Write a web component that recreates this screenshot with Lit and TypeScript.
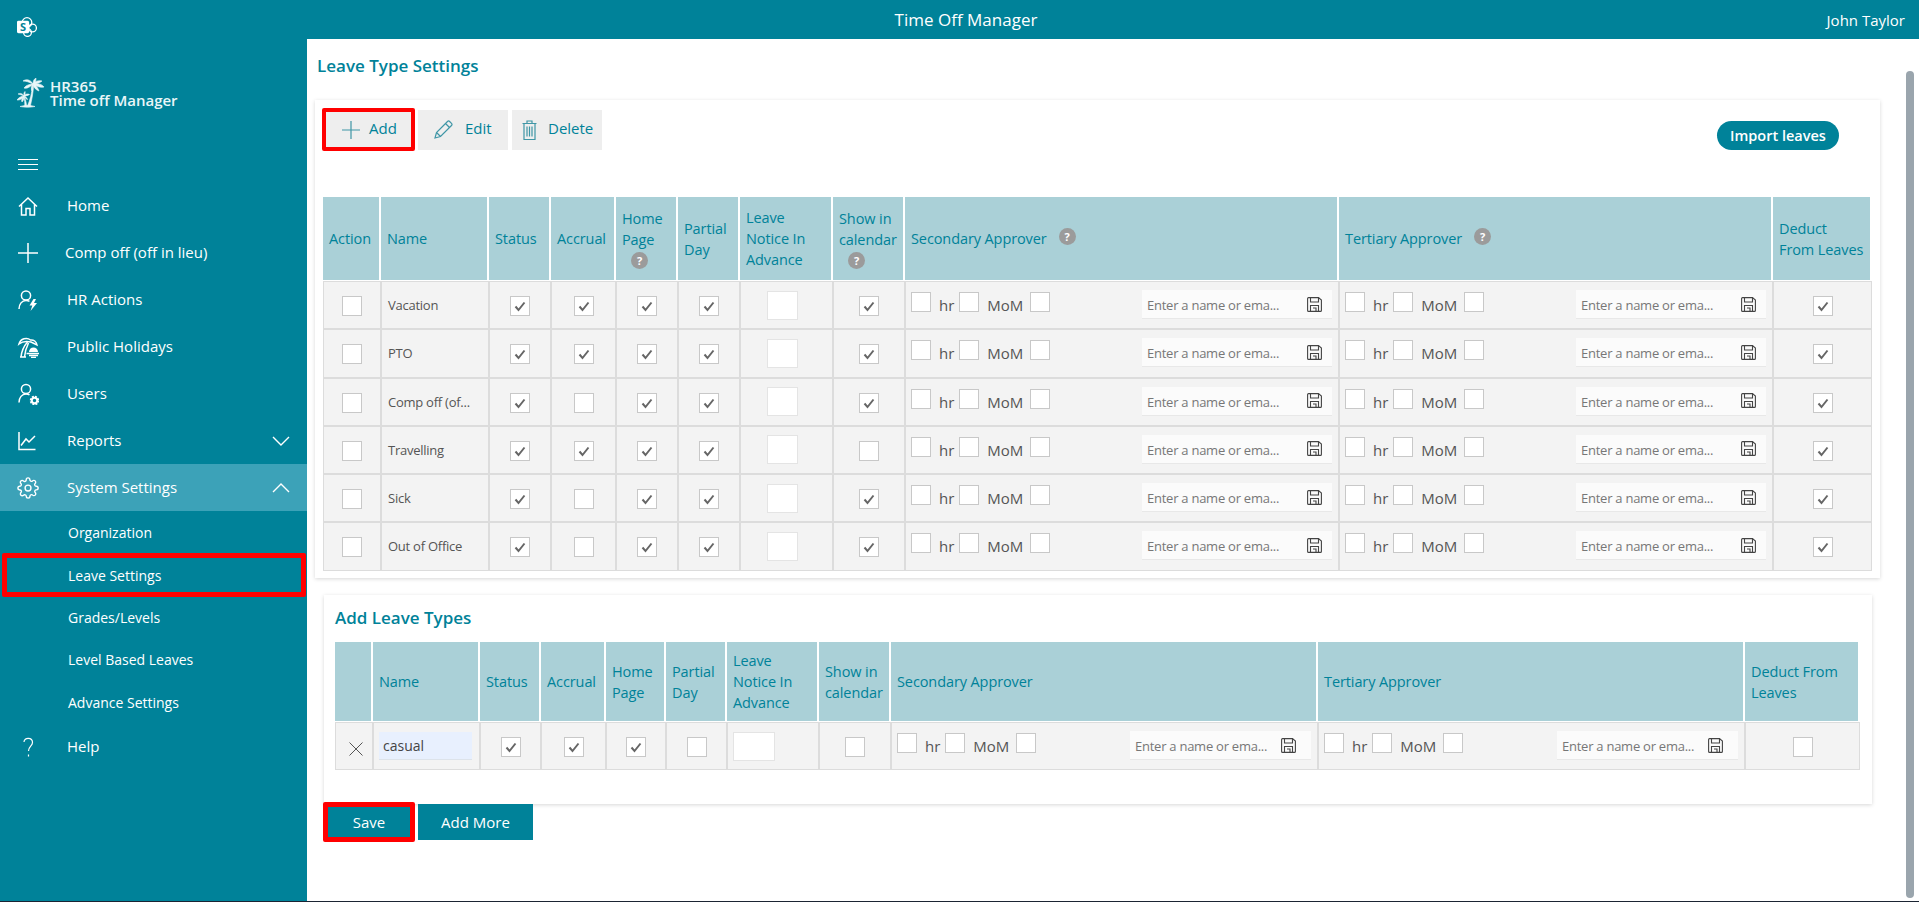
import { LitElement, html, css, svg } from 'lit';
import { customElement } from 'lit/decorators.js';
import { classMap } from 'lit/directives/class-map.js';

const gearPath = 'M19.4 15a1.65 1.65 0 0 0 .33 1.82l.06.06a2 2 0 0 1 0 2.83 2 2 0 0 1-2.83 0l-.06-.06a1.65 1.65 0 0 0-1.82-.33 1.65 1.65 0 0 0-1 1.51V21a2 2 0 0 1-2 2 2 2 0 0 1-2-2v-.09A1.65 1.65 0 0 0 9 19.4a1.65 1.65 0 0 0-1.82.33l-.06.06a2 2 0 0 1-2.83 0 2 2 0 0 1 0-2.83l.06-.06a1.65 1.65 0 0 0 .33-1.82 1.65 1.65 0 0 0-1.51-1H3a2 2 0 0 1-2-2 2 2 0 0 1 2-2h.09A1.65 1.65 0 0 0 4.6 9a1.65 1.65 0 0 0-.33-1.82l-.06-.06a2 2 0 0 1 0-2.83 2 2 0 0 1 2.83 0l.06.06a1.65 1.65 0 0 0 1.82.33H9a1.65 1.65 0 0 0 1-1.51V3a2 2 0 0 1 2-2 2 2 0 0 1 2 2v.09a1.65 1.65 0 0 0 1 1.51 1.65 1.65 0 0 0 1.82-.33l.06-.06a2 2 0 0 1 2.83 0 2 2 0 0 1 0 2.83l-.06.06a1.65 1.65 0 0 0-.33 1.82V9a1.65 1.65 0 0 0 1.51 1H21a2 2 0 0 1 2 2 2 2 0 0 1-2 2h-.09a1.65 1.65 0 0 0-1.51 1z';

const navIcons: Record<string, unknown> = {
  home: svg`<path d="M2 11.5 11 3l9 8.5M4.5 9.5V20H9v-6.5h4V20h4.5V9.5"/>`,
  plus: svg`<path d="M1 11h20M11 1v20"/>`,
  hr: svg`<circle cx="9" cy="6.5" r="4.6"/><path d="M2 20c0-5 3-8.500 7-8.500 1.500 0 2.500.3 3.500.9"/><path fill="#fff" stroke="none" d="M16.500 10 12.500 16.500h2.800L13.500 22l6.500-8h-3l2-4z"/>`,
  holidays: svg`<path d="M2 8C3.500 2.500 10 1 13.500 4c3-.5 6 1.500 6.500 5l-6-3C10 5 5 5.500 2 8z"/><path d="M4 21c.5-5 3-11 6.500-15M7.500 21c.5-5 2-10 4-14M3 21h6"/><path fill="#fff" stroke="none" d="M12 16a4.500 4.500 0 0 1 9 0z"/><path d="M9.500 17.500H23M12 19.500h9M14 21.500h5"/>`,
  users: svg`<circle cx="9" cy="6" r="4.600"/><path d="M2 19.500c0-5 3-8.500 7-8.500 1.500 0 2.500.3 3.500.9"/><circle cx="17.500" cy="17.500" r="2.700" stroke-width="2"/><circle cx="17.500" cy="17.500" r="4" stroke-width="1.500" stroke-dasharray="2 1.140"/>`,
  chart: svg`<path d="M2 2v17.500h16.500M4 15.500l5-6.500 3 3 6-6"/>`,
  settings: svg`<g transform="scale(.92)"><circle cx="12" cy="12" r="3.200"/><path d="${gearPath}"/></g>`,
  help: svg`<path d="M7 6c0-5 8.500-5 8.500.5 0 3.500-4 4-4 8.500M11.500 18.500V20.500" stroke-width="1.200"/>`,
};

const navBefore = [
  { label: 'Home', icon: 'home' },
  { label: 'Comp off (off in lieu)', icon: 'plus', tight: true },
  { label: 'HR Actions', icon: 'hr' },
  { label: 'Public Holidays', icon: 'holidays' },
  { label: 'Users', icon: 'users' },
  { label: 'Reports', icon: 'chart', chevron: 'M1 1l8 8 8-8' },
  { label: 'System Settings', icon: 'settings', chevron: 'M1 9l8-8 8 8', active: true },
];

const subNav = ['Organization', 'Leave Settings', 'Grades/Levels', 'Level Based Leaves', 'Advance Settings'];

const leaves = [
  { name: 'Vacation', accrual: true, calendar: true },
  { name: 'PTO', accrual: true, calendar: true },
  { name: 'Comp off (of...', accrual: false, calendar: true },
  { name: 'Travelling', accrual: true, calendar: false },
  { name: 'Sick', accrual: false, calendar: true },
  { name: 'Out of Office', accrual: false, calendar: true },
];

@customElement('app-root')
export class AppRoot extends LitElement {
  static styles = css`
    :host {
      display: flex;
      flex-direction: column;
      height: 902px;
      box-sizing: border-box;
      border-bottom: 1px solid #1b2433;
      font-family: 'Open Sans', 'Noto Sans', sans-serif;
      font-size: 14px;
      color: #555;
      background: #fff;
      overflow: hidden;
    }

    .topbar {
      display: grid;
      grid-template-columns: 1fr auto 1fr;
      align-items: center;
      flex: 0 0 39px;
      background: #008299;
      color: #fff;
      padding: 0 14px 0 17px;
    }

    .sp-logo {
      align-self: end;
      margin-bottom: 2px;
      display: block;
    }

    .topbar-title {
      font-size: 17px;
      margin-left: 10px;
    }

    .topbar-user {
      justify-self: end;
      font-size: 15px;
    }

    .body {
      display: flex;
      flex: 1;
      min-height: 0;
    }

    aside {
      flex: 0 0 307px;
      background: #008299;
      color: #fff;
    }

    .brand {
      display: flex;
      margin: 39px 0 0 17px;
      height: 30px;
      gap: 5px;
    }

    .brand-text {
      font-weight: 600;
      font-size: 15px;
      line-height: 14px;
      color: #eaf6f8;
      padding-top: 1px;
    }

    .burger {
      display: block;
      margin: 51px 0 12px 18px;
    }

    .nav-row {
      display: flex;
      align-items: center;
      height: 47px;
      padding-left: 17px;
      font-size: 15px;
    }

    .nav-row span {
      margin-top: -2px;
    }

    .nav-row.active {
      background: #3ca2b8;
    }

    .nav-icon {
      flex: 0 0 22px;
      width: 22px;
      height: 22px;
      margin-right: 28px;
      fill: none;
      stroke: #fff;
      stroke-width: 1.5;
    }

    .nav-row.tight .nav-icon {
      margin-right: 26px;
    }

    .chevron {
      margin-left: auto;
      margin-right: 17px;
      fill: none;
      stroke: #fff;
      stroke-width: 1.4;
    }

    .sub-row {
      display: flex;
      align-items: center;
      height: 42.5px;
      padding-left: 68px;
      font-size: 14px;
      box-sizing: border-box;
    }

    .sub-row.marked {
      margin-left: 2px;
      width: 304px;
      padding-left: 61px;
      border: 5px solid #ff0000;
      border-radius: 2px;
      height: 44px;
      margin-top: -0.5px;
      margin-bottom: -1px;
    }

    main {
      position: relative;
      flex: 1;
      padding-left: 8px;
    }

    .scroll-thumb {
      position: absolute;
      top: 32px;
      right: 5px;
      bottom: 3px;
      width: 8px;
      border-radius: 4px;
      background: #9aa5ad;
    }

    h1 {
      margin: 0 0 0 2px;
      height: 61px;
      display: flex;
      align-items: center;
      padding-bottom: 9px;
      box-sizing: border-box;
      font-size: 17px;
      font-weight: 600;
      color: #008299;
    }

    .card {
      background: #fff;
      box-shadow: 0 1px 4px rgba(0, 0, 0, 0.16);
    }

    .card-leaves {
      width: 1565px;
      height: 478px;
      box-sizing: border-box;
      padding: 8px 0 0 8px;
    }

    .card-add {
      width: 1548px;
      height: 209px;
      margin: 17px 0 0 9px;
      box-sizing: border-box;
      padding: 11px 0 0 11px;
    }

    .toolbar {
      display: flex;
      align-items: center;
      height: 43px;
      margin: 0 0 46px -1px;
    }

    .tool {
      display: flex;
      align-items: center;
      box-sizing: border-box;
      height: 40px;
      width: 90px;
      background: #eee;
      color: #008299;
      font-size: 15px;
      margin-right: 4px;
    }

    .tool span {
      margin-bottom: 4px;
    }

    .tool svg {
      fill: none;
      stroke: #3f96a6;
      stroke-width: 1.2;
    }

    .tool.add {
      width: 93px;
      height: 43px;
      padding-left: 16px;
      gap: 9px;
      border: 4px solid #ff0000;
      border-radius: 2px;
      margin-right: 3px;
    }

    .tool.edit {
      padding-left: 16px;
      gap: 12px;
    }

    .tool.delete {
      padding-left: 10px;
      gap: 11px;
    }

    .import {
      margin-left: auto;
      margin-right: 41px;
      margin-top: 13px;
      align-self: flex-start;
      display: flex;
      align-items: center;
      justify-content: center;
      width: 122px;
      height: 29px;
      border-radius: 15px;
      background: #008299;
      color: #fff;
      font-size: 14.5px;
      font-weight: 600;
    }

    .grid {
      display: grid;
    }

    .grid.existing {
      grid-template-columns: 58px 108px 62px 65px 62px 62px 93px 72px 434px 434px 99px;
      grid-template-rows: 84px;
      grid-auto-rows: 48.25px;
    }

    .grid.adding {
      grid-template-columns: 38px 107px 61px 65px 60px 61px 92px 72px 427px 427px 115px;
      grid-template-rows: 80px;
      grid-auto-rows: 48px;
    }

    .head {
      display: flex;
      align-items: center;
      background: #aad0d7;
      color: #008299;
      font-size: 14.5px;
      line-height: 21px;
      padding-left: 6px;
      margin: 0 2px 1px 0;
      letter-spacing: -0.1px;
    }

    .head:last-of-type {
      margin-right: 0;
    }

    .hint {
      display: inline-flex;
      align-items: center;
      justify-content: center;
      width: 17px;
      height: 17px;
      border-radius: 50%;
      background: #9b9b9b;
      color: #fff;
      font-size: 11px;
      font-weight: 700;
      line-height: 17px;
      letter-spacing: 0;
    }

    .hint.below {
      display: flex;
      margin: 2px 0 0 9px;
    }

    .hint.beside {
      margin: 0 0 4px 12px;
    }

    .cell {
      box-sizing: border-box;
      background: #f3f3f3;
      border: 1px solid #dcdcdc;
      display: flex;
      align-items: center;
      min-width: 0;
    }

    .cell.mid {
      justify-content: center;
      padding-top: 2px;
    }

    .cell.name {
      padding-left: 6px;
      white-space: nowrap;
      letter-spacing: -0.25px;
      font-size: 13px;
    }

    .cell.approver {
      align-items: flex-start;
      padding: 10px 6px 0 5px;
    }

    .box {
      flex: none;
      box-sizing: border-box;
      width: 20px;
      height: 20px;
      background: #fff;
      border: 1px solid #c8c8c8;
    }

    .box svg {
      display: block;
      fill: none;
      stroke: #666;
      stroke-width: 2;
    }

    .notice {
      box-sizing: border-box;
      width: 31px;
      height: 29px;
      margin: 0 9px 2px 0;
      background: #fff;
      border: 1px solid #e4e4e4;
    }

    .adding .notice {
      width: 42px;
      margin-right: 38px;
    }

    .tag {
      font-size: 15px;
      line-height: 20px;
      margin: 3px 5px 0 8px;
    }

    .tag.mom {
      margin-right: 7px;
    }

    .people {
      display: flex;
      align-items: center;
      justify-content: space-between;
      box-sizing: border-box;
      width: 190px;
      height: 29px;
      margin: -2px 0 0 auto;
      padding: 0 10px 0 5px;
      background: #fbfbfb;
      border-bottom: 1px solid #e8e8e8;
      color: #777;
      font-size: 13px;
      letter-spacing: -0.25px;
      white-space: nowrap;
    }

    .people span {
      margin-top: 2px;
    }

    .adding .people {
      width: 181px;
      padding-right: 15px;
    }

    .people svg {
      flex: none;
      fill: none;
      stroke: #444;
      stroke-width: 1.1;
    }

    .card-title {
      height: 36px;
      font-size: 17px;
      font-weight: 600;
      line-height: 24px;
      color: #008299;
    }

    .remove {
      fill: none;
      stroke: #555;
      stroke-width: 1;
      margin: 4px 0 0 4px;
    }

    .casual {
      box-sizing: border-box;
      width: 93px;
      height: 28px;
      margin-left: 5px;
      padding-left: 4px;
      line-height: 28px;
      background: #e8f0fe;
      border-bottom: 1px solid #dde3ea;
      color: #444;
    }

    .actions {
      display: flex;
      align-items: flex-start;
      margin: -2px 0 0 8px;
    }

    .action {
      box-sizing: border-box;
      display: flex;
      align-items: center;
      justify-content: center;
      background: #008299;
      color: #fff;
      height: 36px;
      font-size: 15px;
    }

    .action.save {
      width: 92px;
      height: 40px;
      border: 5px solid #ff0000;
      border-radius: 2px;
      margin-right: 3px;
    }

    .action.more {
      width: 115px;
      margin-top: 2px;
    }
  `;

  private check(on: boolean) {
    return html`<div class="box">
      ${on ? html`<svg width="18" height="18" viewBox="0 0 18 18"><path d="M4.500 9.500 7.500 13 13.500 5.500"/></svg>` : ''}
    </div>`;
  }

  private saveIcon() {
    return html`<svg width="15" height="15" viewBox="0 0 15 15">
      <path d="M1.500.6h10L14.400 3v10.400a1 1 0 0 1-1 1H1.600a1 1 0 0 1-1-1V1.500a1 1 0 0 1 .9-.9z"/>
      <path d="M3.500.6v4.400h8V.6M3.500 14.400V8.500h8v5.900M6 11h3v3.400"/>
    </svg>`;
  }

  private approver() {
    return html`<div class="cell approver">
      <div class="box"></div>
      <span class="tag">hr</span>
      <div class="box"></div>
      <span class="tag mom">MoM</span>
      <div class="box"></div>
      <div class="people"><span>Enter a name or ema...</span>${this.saveIcon()}</div>
    </div>`;
  }

  private hintBelow() {
    return html`<span class="hint below">?</span>`;
  }

  private renderExisting() {
    return html`<div class="grid existing">
      <div class="head">Action</div>
      <div class="head">Name</div>
      <div class="head">Status</div>
      <div class="head">Accrual</div>
      <div class="head"><div>Home<br />Page${this.hintBelow()}</div></div>
      <div class="head">Partial<br />Day</div>
      <div class="head">Leave<br />Notice In<br />Advance</div>
      <div class="head"><div>Show in<br />calendar${this.hintBelow()}</div></div>
      <div class="head">Secondary Approver<span class="hint beside">?</span></div>
      <div class="head">Tertiary Approver<span class="hint beside">?</span></div>
      <div class="head">Deduct<br />From Leaves</div>
      ${leaves.map(
        (l) => html`
          <div class="cell mid">${this.check(false)}</div>
          <div class="cell name">${l.name}</div>
          <div class="cell mid">${this.check(true)}</div>
          <div class="cell mid">${this.check(l.accrual)}</div>
          <div class="cell mid">${this.check(true)}</div>
          <div class="cell mid">${this.check(true)}</div>
          <div class="cell mid"><div class="notice"></div></div>
          <div class="cell mid">${this.check(l.calendar)}</div>
          ${this.approver()} ${this.approver()}
          <div class="cell mid">${this.check(true)}</div>
        `
      )}
    </div>`;
  }

  private renderAdding() {
    return html`<div class="grid adding">
      <div class="head"></div>
      <div class="head">Name</div>
      <div class="head">Status</div>
      <div class="head">Accrual</div>
      <div class="head">Home<br />Page</div>
      <div class="head">Partial<br />Day</div>
      <div class="head">Leave<br />Notice In<br />Advance</div>
      <div class="head">Show in<br />calendar</div>
      <div class="head">Secondary Approver</div>
      <div class="head">Tertiary Approver</div>
      <div class="head">Deduct From<br />Leaves</div>
      <div class="cell mid">
        <svg class="remove" width="14" height="14" viewBox="0 0 14 14"><path d="M.5.5l13 13M13.500.5l-13 13"/></svg>
      </div>
      <div class="cell"><div class="casual">casual</div></div>
      <div class="cell mid">${this.check(true)}</div>
      <div class="cell mid">${this.check(true)}</div>
      <div class="cell mid">${this.check(true)}</div>
      <div class="cell mid">${this.check(false)}</div>
      <div class="cell mid"><div class="notice"></div></div>
      <div class="cell mid">${this.check(false)}</div>
      ${this.approver()} ${this.approver()}
      <div class="cell mid">${this.check(false)}</div>
    </div>`;
  }

  render() {
    return html`
      <header class="topbar">
        <svg class="sp-logo" width="20" height="20" viewBox="0 0 20 20" fill="none" stroke="#fff" stroke-width="1.300">
          <circle cx="10" cy="5.500" r="4.800" />
          <circle cx="15.500" cy="11" r="3.900" />
          <circle cx="10.500" cy="15.500" r="3.900" />
          <rect x="0.500" y="4.500" width="11" height="11" rx="1" fill="#fff" />
          <text x="6" y="13.500" text-anchor="middle" font-size="11" font-weight="700" fill="#008299" stroke="none">S</text>
        </svg>
        <div class="topbar-title">Time Off Manager</div>
        <div class="topbar-user">John Taylor</div>
      </header>
      <div class="body">
        <aside>
          <div class="brand">
            <svg width="28" height="30" viewBox="0 0 28 30" fill="#eaf6f8" stroke="#eaf6f8" stroke-width=".6">
              <path d="M16 6C13 1 9 1 6 3c3 0 6 1 10 3zM16 6c0-3 1-5 3-6 0 2 0 4-3 6zM16 6c2-3 6-4 9-3-2 2-6 3-9 3zM16 6c4-1 9 0 11 3-4 1-8-1-11-3zM16 6c3 1 5 4 6 7-3-1-5-3-6-7zM16 6c-3 0-7 1-9 4 3 1 6-1 9-4zM16 6c-1 3-1 5-1 7-1-2-1-5 1-7z" />
              <path d="M15.500 7c-.5 8-2.500 15-5 21h2.800c1.500-6 3-14 3.300-21z" />
              <path d="M7 18c-2-3-4-3-6-2 2 .3 4 1 6 2zM7 18c-.5-2 0-3.500 1-4.500.5 1.500 0 3-1 4.500zM7 18c1-2 4-2.500 5.500-1.500C11 17.500 9 18 7 18zM7 18c-2 0-5 1-7 4 3 .5 5-1.500 7-4zM7 18c0 2 0 4-2 6-1-2 0-4 2-6zM7 18c2 .5 3 2 3.500 3.500C9 21 8 20 7 18z" />
              <path d="M7 19c.5 3 1 6 .8 9H9.500c0-3-1-6-2-9z" />
              <path d="M3 28.500c4-1.500 11-1.500 15 0-5 1-10 1-15 0z" />
            </svg>
            <div class="brand-text">HR365<br />Time off Manager</div>
          </div>
          <svg class="burger" width="20" height="11" viewBox="0 0 20 11" stroke="#fff" stroke-width="1"><path d="M0 .5h20M0 5.500h20M0 10.500h20" /></svg>
          ${navBefore.map(
            (n) => html`<div class=${classMap({ 'nav-row': true, active: !!n.active, tight: !!n.tight })}>
              <svg class="nav-icon" viewBox="0 0 22 22">${navIcons[n.icon]}</svg>
              <span>${n.label}</span>
              ${n.chevron ? html`<svg class="chevron" width="18" height="10" viewBox="0 0 18 10"><path d=${n.chevron} /></svg>` : ''}
            </div>`
          )}
          ${subNav.map(
            (label) => html`<div class=${classMap({ 'sub-row': true, marked: label === 'Leave Settings' })}>${label}</div>`
          )}
          <div class="nav-row">
            <svg class="nav-icon" viewBox="0 0 22 22">${navIcons.help}</svg>
            <span>Help</span>
          </div>
        </aside>
        <main>
          <div class="scroll-thumb"></div>
          <h1>Leave Type Settings</h1>
          <section class="card card-leaves">
            <div class="toolbar">
              <div class="tool add">
                <svg width="18" height="18" viewBox="0 0 18 18"><path d="M0 9h18M9 0v18" /></svg>
                <span>Add</span>
              </div>
              <div class="tool edit">
                <svg width="19" height="19" viewBox="0 0 19 19"><path d="M1 18l1.500-5.500L13.500 1.500a1.500 1.500 0 0 1 2.100 0l1.900 1.900a1.500 1.500 0 0 1 0 2.100L6.500 16.500zM2.500 12.500l4 4M11.500 3.500l4 4" /></svg>
                <span>Edit</span>
              </div>
              <div class="tool delete">
                <svg width="15" height="20" viewBox="0 0 15 20"><path d="M.5 3.500h14M5 3.500V1h5v2.500M2 3.500V19.500h11V3.500M5 6.500v10M7.500 6.500v10M10 6.500v10" /></svg>
                <span>Delete</span>
              </div>
              <div class="import">Import leaves</div>
            </div>
            ${this.renderExisting()}
          </section>
          <section class="card card-add">
            <div class="card-title">Add Leave Types</div>
            ${this.renderAdding()}
          </section>
          <div class="actions">
            <div class="action save">Save</div>
            <div class="action more">Add More</div>
          </div>
        </main>
      </div>
    `;
  }
}
